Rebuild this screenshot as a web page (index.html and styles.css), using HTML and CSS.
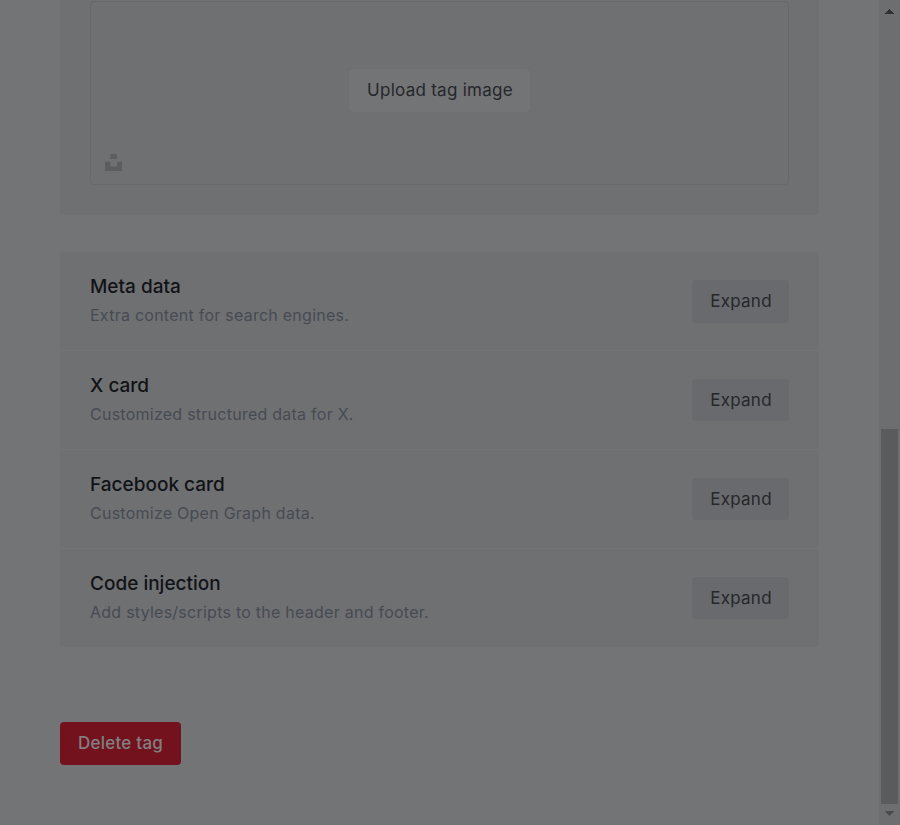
FILE: index.html
```html
<!DOCTYPE html>
<html lang="en">
<head>
<meta charset="utf-8">
<title>Tag settings</title>
<link rel="stylesheet" href="styles.css">
</head>
<body>
<main class="content">
  <section class="panel panel-image">
    <div class="uploader">
      <button class="btn btn-upload">Upload tag image</button>
      <svg class="unsplash" viewBox="0 0 17 17" width="17" height="17" aria-hidden="true"><path d="M5.4 0H12v5H5.4zM0 7.8h5.4v4.7H12V7.8h5V17H0z"/></svg>
    </div>
  </section>
  <section class="panel panel-list">
    <div class="row">
      <div><h4>Meta data</h4><p>Extra content for search engines.</p></div>
      <button class="btn">Expand</button>
    </div>
    <div class="row">
      <div><h4>X card</h4><p>Customized structured data for X.</p></div>
      <button class="btn btn-short">Expand</button>
    </div>
    <div class="row">
      <div><h4>Facebook card</h4><p>Customize Open Graph data.</p></div>
      <button class="btn btn-short">Expand</button>
    </div>
    <div class="row">
      <div><h4>Code injection</h4><p>Add styles/scripts to the header and footer.</p></div>
      <button class="btn btn-short">Expand</button>
    </div>
  </section>
  <button class="btn btn-red">Delete tag</button>
</main>
<aside class="scrollbar">
  <svg class="arrow arrow-up" viewBox="0 0 9 5" width="9" height="5"><path d="M4 0h1v1h1v1h1v1h1v1h1v1H0V4h1V3h1V2h1V1h1z"/></svg>
  <div class="thumb"></div>
  <svg class="arrow" viewBox="0 0 9 5" width="9" height="5"><path d="M0 0h9v1H8v1H7v1H6v1H5v1H4V4H3V3H2V2H1V1H0z"/></svg>
</aside>
</body>
</html>
```
FILE: styles.css
```css
* { box-sizing: border-box; }
body {
  margin: 0;
  height: 825px;
  overflow: hidden;
  display: flex;
  background: #737476;
  font-family: Inter, "Liberation Sans", sans-serif;
}
.content {
  width: 879px;
  padding: 0 60px;
}
.panel {
  width: 759px;
  background: #6f7072;
}
.panel-image {
  height: 215px;
  padding: 1px 30px 30px;
  border-radius: 0 0 4px 4px;
}
.uploader {
  position: relative;
  display: flex;
  align-items: center;
  justify-content: center;
  width: 699px;
  height: 184px;
  padding-bottom: 5px;
  border: 1px solid #67686b;
  border-radius: 4px;
}
.unsplash {
  position: absolute;
  left: 14px;
  bottom: 13px;
  fill: #5c5d60;
}
.panel-list {
  margin-top: 37px;
  border-radius: 4px;
}
.row {
  display: flex;
  align-items: center;
  justify-content: space-between;
  height: 99px;
  padding: 0 30px;
  border-bottom: 1px solid #737476;
}
.row:last-child {
  height: 98px;
  border-bottom: 0;
}
h4 {
  margin: 0;
  padding-top: 1px;
  font-size: 19px;
  font-weight: 500;
  line-height: 24px;
  letter-spacing: 0;
  color: #111316;
}
p {
  margin: 4px 0 2px;
  font-size: 16px;
  line-height: 24px;
  letter-spacing: 0.25px;
  color: #464b53;
}
.btn {
  display: block;
  width: 97px;
  height: 43px;
  padding: 0 0 0 1px;
  border: 0;
  border-radius: 4px;
  background: #696a6d;
  color: #25272b;
  font: 400 17px/43px Inter, "Liberation Sans", sans-serif;
  letter-spacing: 0.27px;
}
.btn-short {
  height: 42px;
  margin-bottom: 1px;
}
.btn-upload {
  width: 181px;
  height: 43px;
  background: #737476;
  box-shadow: 0 0 1px #66676a;
}
.btn-red {
  width: 121px;
  margin-top: 75px;
  padding: 0;
  background: #73121d;
  color: #808083;
  font-weight: 500;
  letter-spacing: 0.25px;
}
.scrollbar {
  display: flex;
  flex-direction: column;
  align-items: center;
  width: 21px;
  padding: 9px 2px 9px;
  background: #6d6e70;
}
.arrow {
  fill: #4a4b4d;
}
.arrow-up {
  fill: #303133;
}
.thumb {
  width: 17px;
  height: 375px;
  margin: 415px 0 7px;
  background: #5a5b5d;
}
```
